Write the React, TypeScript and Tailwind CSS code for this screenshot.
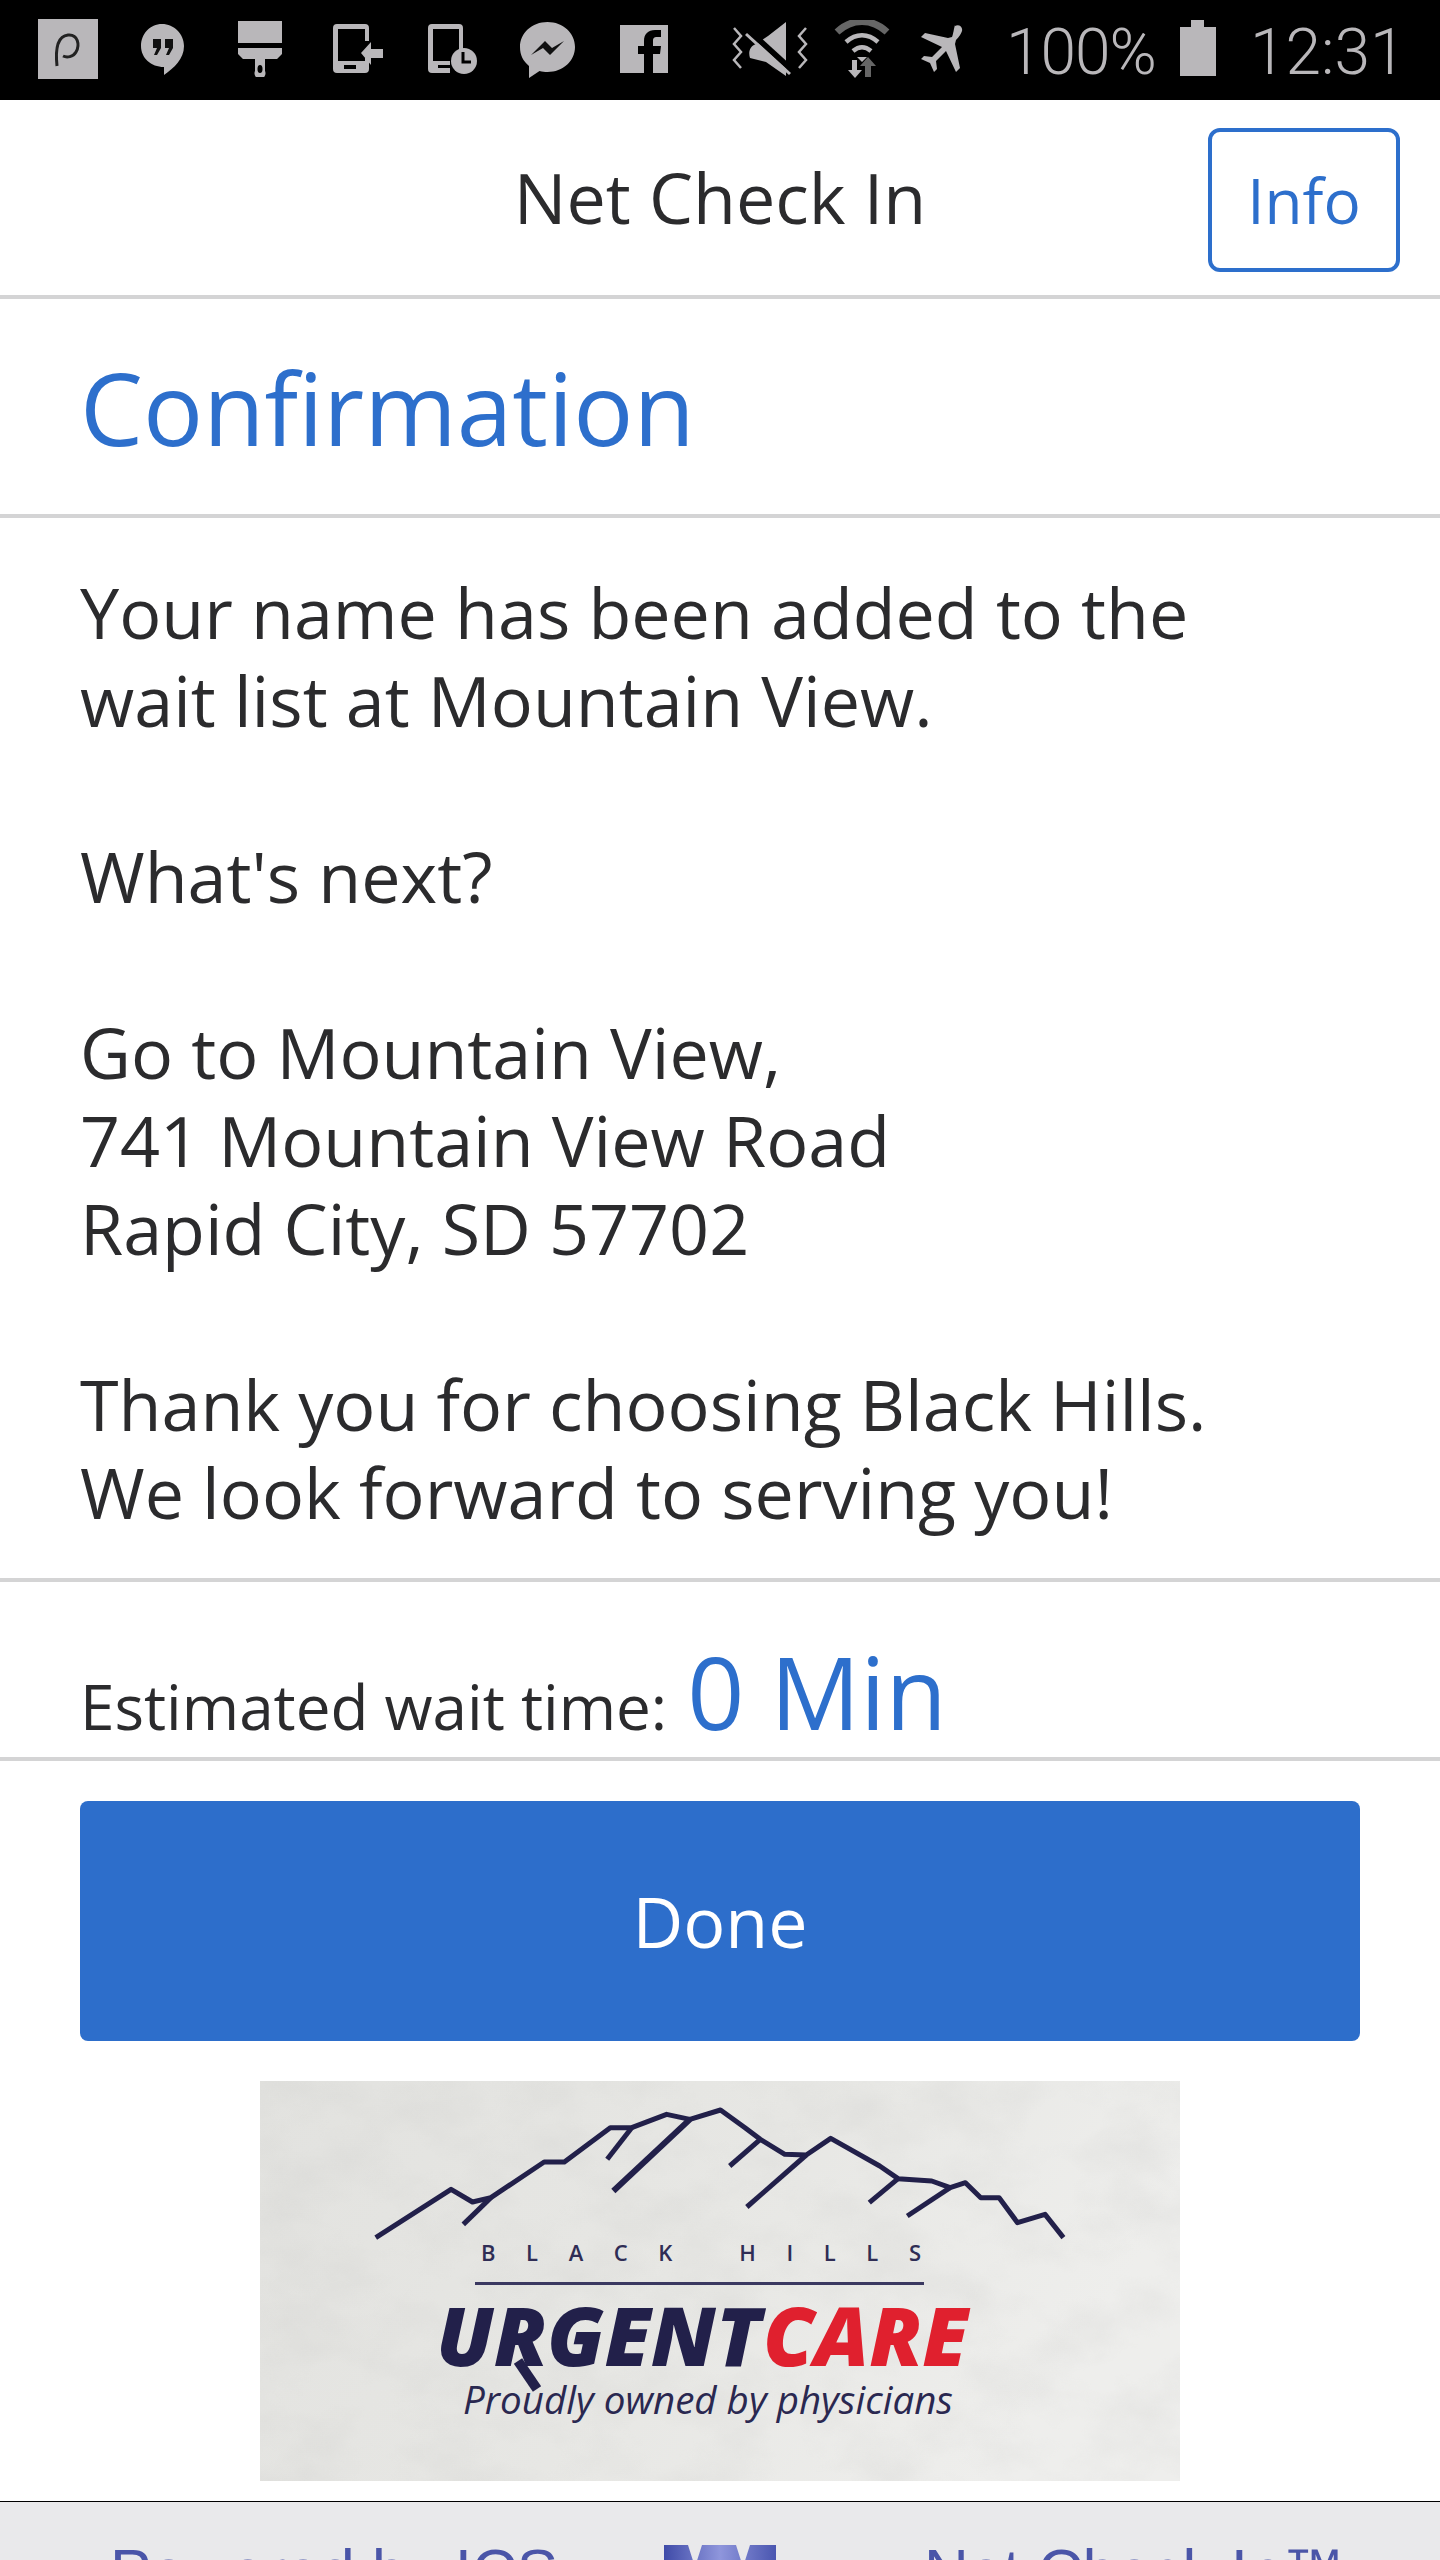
const G = "#b9b7ba";
const pts = (a: number[][]) => a.map(([x, y]) => `${(x - 33) / 1.633},${(y - 40) / 3}`).join(" ");

function Logo() {
  return (
    <svg width="920" height="400" viewBox="0 0 920 400" className="block">
      <defs>
        <filter id="tex" x="0" y="0" width="100%" height="100%">
          <feTurbulence type="fractalNoise" baseFrequency="0.012 0.018" numOctaves="4" seed="7" />
          <feColorMatrix values="0 0 0 0 0.5 0 0 0 0 0.5 0 0 0 0 0.49 1.6 0 0 0 -0.62" />
        </filter>
        <linearGradient id="bgG" x1="0" x2="1" y1="0" y2="0.3">
          <stop offset="0" stopColor="#e2e2df" />
          <stop offset="0.55" stopColor="#e7e7e4" />
          <stop offset="1" stopColor="#eeeeec" />
        </linearGradient>
      </defs>
      <rect width="920" height="400" fill="url(#bgG)" />
      <rect width="920" height="400" filter="url(#tex)" opacity="0.2" />
      <g fill="none" stroke="#22204a" strokeWidth="5" strokeLinejoin="round">
        <polyline points={pts([[222,510],[345,365],[380,403],[410,390],[497,283],[530,283],[605,180],[640,180],[697,140],[735,155],[785,127],[825,180],[850,215],[890,260],[925,262],[965,212],[1045,295],[1075,333],[1130,340],[1160,360],[1185,345],[1210,390],[1240,390],[1270,465],[1315,440],[1345,510]])} />
        <polyline points={pts([[410,390],[365,470]])} />
        <polyline points={pts([[640,180],[600,275]])} />
        <polyline points={pts([[735,155],[610,370]])} strokeWidth="6" />
        <polyline points={pts([[850,215],[800,295]])} />
        <polyline points={pts([[925,262],[828,418]])} />
        <polyline points={pts([[1075,333],[1028,405]])} />
        <polyline points={pts([[1160,360],[1090,445]])} />
      </g>
      <text x="221" y="180" fontFamily="'Open Sans', sans-serif" fontSize="22" fontWeight="600" fill="#2f2d55" textLength="440">BLACK  HILLS</text>
      <rect x="215" y="201" width="449" height="3" fill="#3a3860" />
      <text x="176" y="285" fontFamily="'Open Sans', sans-serif" fontSize="82" fontWeight="800" fontStyle="italic" fill="#22204a" textLength="325" lengthAdjust="spacingAndGlyphs">URGENT</text>
      <text x="503" y="285" fontFamily="'Open Sans', sans-serif" fontSize="82" fontWeight="800" fontStyle="italic" fill="#e0202e" textLength="205" lengthAdjust="spacingAndGlyphs">CARE</text>
      <line x1="258" y1="280" x2="277" y2="308" stroke="#22204a" strokeWidth="10" />
      <text x="203" y="333" fontFamily="'Open Sans', sans-serif" fontSize="38" fontStyle="italic" fill="#2a2850" textLength="490" lengthAdjust="spacingAndGlyphs">Proudly owned by physicians</text>
    </svg>
  );
}

function StatusBar() {
  return (
    <div className="h-[100px] bg-black flex items-start text-[#b9b7ba]">
      <svg width="60" height="60" viewBox="0 0 60 60" className="ml-[38px] mt-[19px]">
        <rect width="60" height="60" fill={G} />
        <path d="M19 47 C17 28 21 17 30 16 C40 15 42 26 38 33 C35 38 29 39 25 37" fill="none" stroke="#222" strokeWidth="3" />
      </svg>
      <svg width="43" height="51" viewBox="0 0 43 51" className="ml-[43px] mt-[24px]">
        <path d="M21 0 C33 0 43 10 43 22 C43 35 33 44 23 51 L23 43 C10 43 0 34 0 22 C0 10 9 0 21 0Z" fill={G} />
        <path d="M12 15h8v9l-4 7h-3l3-7h-4zM24 15h8v9l-4 7h-3l3-7h-4z" fill="#111" />
      </svg>
      <svg width="44" height="56" viewBox="0 0 44 56" className="ml-[54px] mt-[21px]">
        <path d="M0 0h44v22H0zM0 27h44v6l-5 5H27v12a5.500 5.500 0 1 1-10 0V38H5l-5-5z" fill={G} />
        <ellipse cx="22" cy="48" rx="2.500" ry="4" fill="#000" />
      </svg>
      <svg width="50" height="49" viewBox="0 0 50 49" className="ml-[51px] mt-[24px]">
        <path d="M5 0h27a4 4 0 0 1 4 4v13h-4V5H5v32h27v-3h4v11a4 4 0 0 1-4 4H4a4 4 0 0 1-4-4V4a4 4 0 0 1 4-4z" fill={G} />
        <rect x="11" y="41" width="12" height="4" fill="#000" />
        <path d="M28 29L38 18v7h12v9H38v7z" fill={G} />
      </svg>
      <svg width="49" height="50" viewBox="0 0 49 50" className="ml-[45px] mt-[24px]">
        <path d="M5 0h26a4 4 0 0 1 4 4v21h-4V5H5v32h17v12H4a4 4 0 0 1-4-4V4a4 4 0 0 1 4-4z" fill={G} />
        <rect x="10" y="41" width="12" height="3" fill="#000" />
        <circle cx="36" cy="37" r="13" fill={G} />
        <path d="M35 28v10h8" fill="none" stroke="#000" strokeWidth="3" />
      </svg>
      <svg width="55" height="56" viewBox="0 0 55 56" className="ml-[43px] mt-[22px]">
        <path d="M27.500 0C43 0 55 11 55 25S43 50 27.500 50c-3 0-5-.3-8-1L9 56V44C3 39 0 33 0 25 0 11 12 0 27.500 0z" fill={G} />
        <path d="M11 33L25 19l7 7 12-7-14 14-7-7z" fill="#111" />
      </svg>
      <svg width="48" height="48" viewBox="0 0 48 48" className="ml-[45px] mt-[25px]">
        <path d="M0 0h48v48H33V29h7l1-8h-8v-5c0-3 1-4 4-4h4V5h-6c-7 0-11 4-11 11v5h-6v8h6v19H0z" fill={G} />
      </svg>
      <svg width="76" height="54" viewBox="0 0 76 54" className="ml-[64px] mt-[22px]">
        <path d="M2 8l7 8-7 8 7 8-7 8 7 8M74 8l-7 8 7 8-7 8 7 8-7 8" fill="none" stroke={G} strokeWidth="2.500" transform="translate(0 -2)" />
        <path d="M54 0v54L34 40 18 36C16 30 18 24 24 22L36 14z" fill={G} />
        <path d="M16 8L62 50" stroke="#000" strokeWidth="6" />
        <path d="M14 12L58 52" stroke={G} strokeWidth="3" />
      </svg>
      <svg width="56" height="58" viewBox="0 0 56 58" className="ml-[26px] mt-[20px]">
        <path d="M3 12C18-2 38-2 53 12" fill="none" stroke="#666" strokeWidth="7" />
        <path d="M12 22C22 13 34 13 44 22M19 31c6-5 12-5 18 0" fill="none" stroke={G} strokeWidth="4.500" />
        <path d="M23 37h10l-5 5z" fill={G} />
        <path d="M18 40h5v10h5l-7 8-7-8h4z" fill={G} />
        <path d="M31 57V46h-5l8-9 8 9h-5v11z" fill="#666" />
      </svg>
      <svg width="49" height="48" viewBox="0 0 49 48" className="ml-[24px] mt-[25px]">
        <path d="M41 1c4-2 8 1 7 5-1 3-3 6-6 9l-1 4 5 24-4 4-10-21-10 10 1 8-3 3-4-9-9-4 3-3 8 1 10-10L7 12l4-4 23 5 4-1c1-2 2-9 3-12z" fill={G} />
      </svg>
      <div className="ml-[43px] mt-[15px] font-['Roboto',sans-serif] font-light text-[64px] leading-[75px] tracking-[-1px] w-[160px] whitespace-nowrap">100%</div>
      <svg width="36" height="56" viewBox="0 0 36 56" className="ml-[14px] mt-[20px]">
        <path d="M11 0h13v7h12v49H0V7h11z" fill={G} />
      </svg>
      <div className="ml-[34px] mt-[15px] font-['Roboto',sans-serif] font-light text-[64px] leading-[75px] whitespace-nowrap">12:31</div>
    </div>
  );
}

export default function App() {
  return (
    <div className="w-[1440px] h-[2560px] overflow-hidden bg-white text-[#2b2b2d] font-['Open_Sans','Noto_Sans',sans-serif]">
      <StatusBar />
      <div className="h-[199px] border-b-[4px] border-[#d4d4d5] relative flex items-center justify-center">
        <div className="text-[70px] leading-none pb-[2px]">Net Check In</div>
        <div className="absolute left-[1208px] top-[28px] w-[192px] h-[144px] border-[4px] border-[#2d6fcc] rounded-[12px] flex items-center justify-center text-[#2d6fcc] text-[62px]">Info</div>
      </div>
      <div className="h-[219px] border-b-[4px] border-[#d4d4d5] pl-[80px] flex items-center text-[#2d6fcc] text-[100px] leading-none">Confirmation</div>
      <div className="h-[1064px] border-b-[4px] border-[#d4d4d5] pl-[80px] pt-[50px] text-[70px] leading-[88px]">
        Your name has been added to the<br />
        wait list at Mountain View.<br /><br />
        What's next?<br /><br />
        Go to Mountain View,<br />
        741 Mountain View Road<br />
        Rapid City, SD 57702<br /><br />
        Thank you for choosing Black Hills.<br />
        We look forward to serving you!
      </div>
      <div className="h-[179px] border-b-[4px] border-[#d4d4d5] pl-[80px] flex items-baseline pt-[34px]">
        <span className="text-[62px]">Estimated wait time:</span>
        <span className="ml-[20px] text-[100px] text-[#2d6fcc]">0 Min</span>
      </div>
      <div className="px-[80px] pt-[40px]">
        <div className="h-[240px] bg-[#2d6ecb] rounded-[8px] flex items-center justify-center text-white text-[70px]">Done</div>
      </div>
      <div className="flex justify-center mt-[40px]">
        <Logo />
      </div>
      <div className="mt-[20px] border-t-[1px] border-black bg-[#e9e9eb] h-[60px] overflow-hidden pt-[34px] relative flex font-['Liberation_Sans',sans-serif] text-[#4a55a8] text-[62px] leading-[70px]">
        <span className="ml-[110px] w-[554px] whitespace-nowrap">Powered by ICS</span>
        <svg width="112" height="40" viewBox="0 0 112 40" className="shrink-0 mt-[9px]">
          <defs>
            <linearGradient id="mc" x1="0" x2="1" y1="0" y2="0">
              <stop offset="0" stopColor="#3f4ba8" />
              <stop offset="0.5" stopColor="#8f96dc" />
              <stop offset="1" stopColor="#4a56b0" />
            </linearGradient>
          </defs>
          <rect width="112" height="40" fill="url(#mc)" />
          <path d="M24 0h14l-7 22zM72 0h14l-7 22z" fill="#e9e9eb" />
        </svg>
        <span className="ml-[148px] whitespace-nowrap">Net Check In™</span>
      </div>
    </div>
  );
}
